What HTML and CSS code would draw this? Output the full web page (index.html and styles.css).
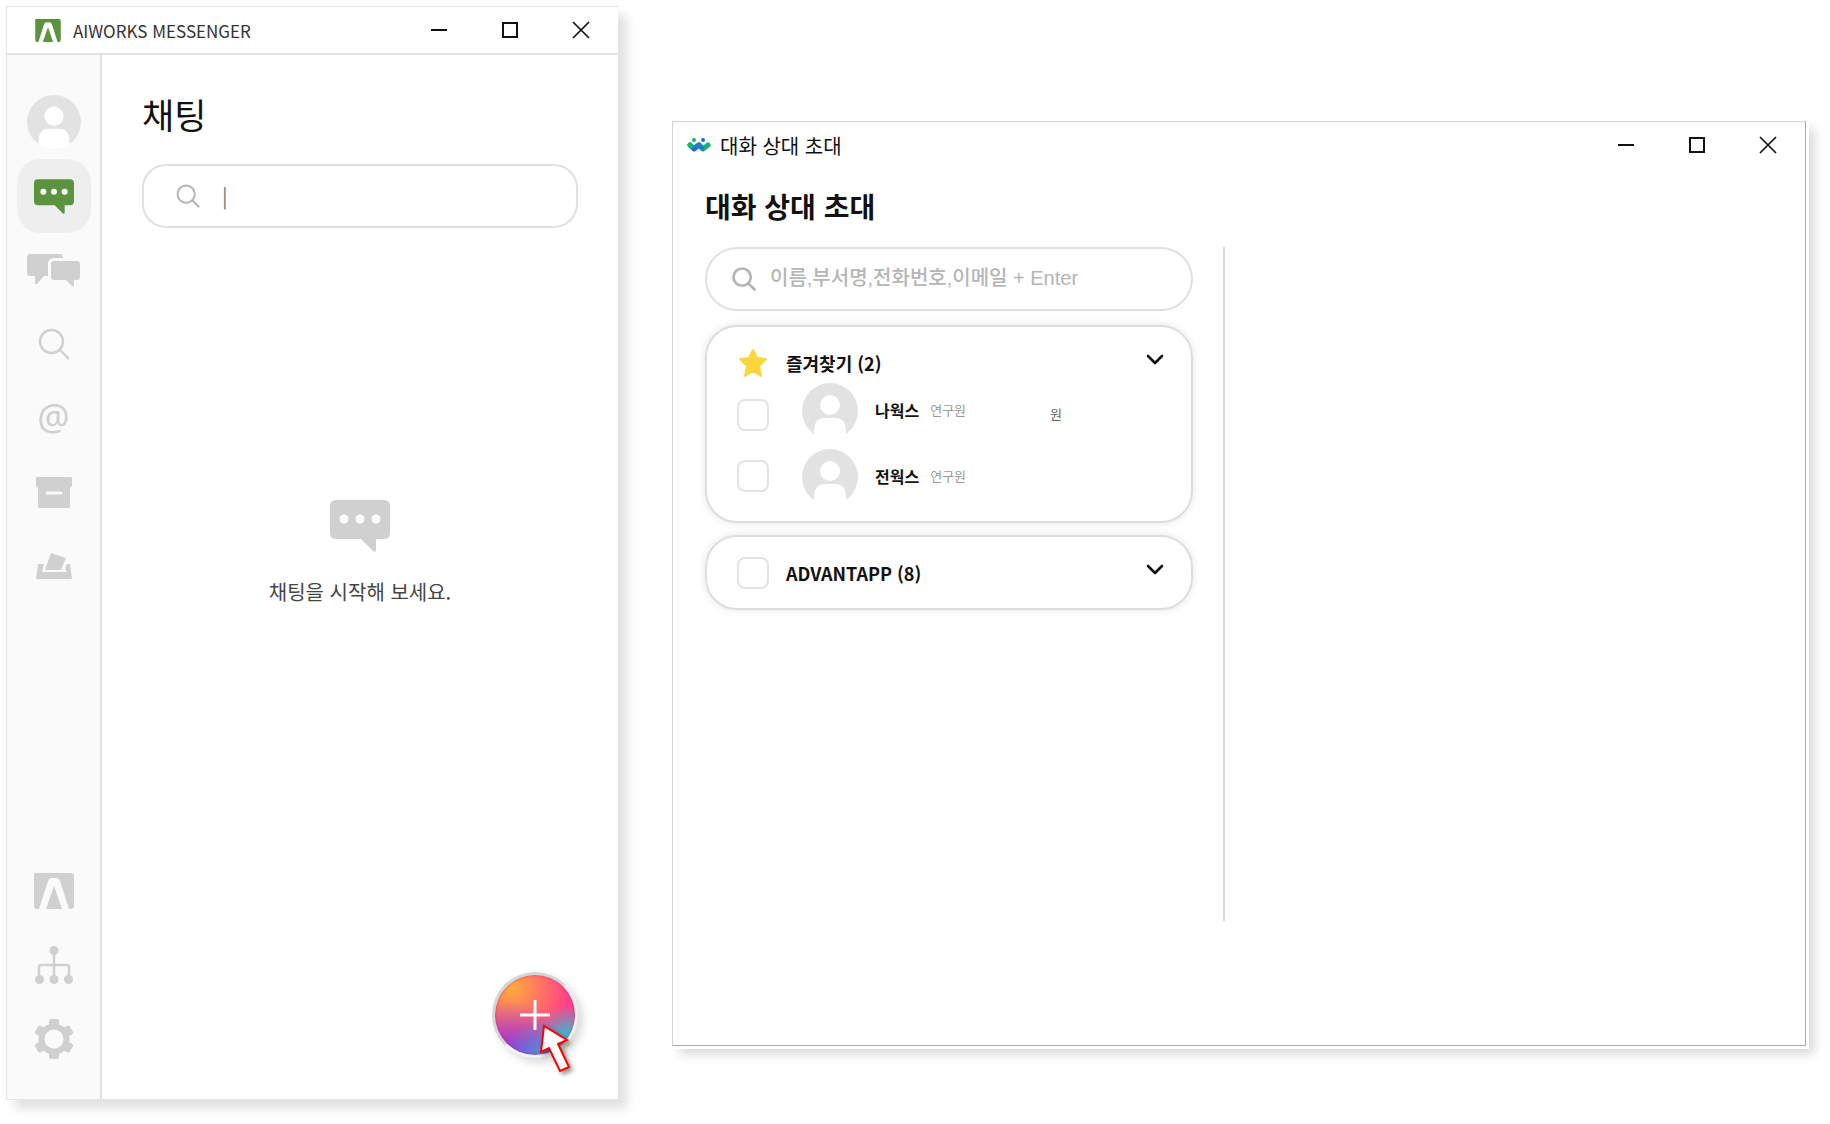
FILE: index.html
```html
<!DOCTYPE html>
<html lang="ko">
<head>
    <meta charset="UTF-8">
    <meta name="viewport" content="width=device-width, initial-scale=1.0">
    <title>AIWORKS MESSENGER</title>
    <link rel="stylesheet" href="styles.css">
</head>
<body>
    <!-- shared icons -->
    <svg class="icon-defs" width="0" height="0" aria-hidden="true">
        <symbol id="icon-logo" viewBox="0 0 40 36">
            <path fill="currentColor" fill-rule="evenodd" d="M1 0H37Q40 0 40 3V33Q40 36 37 36H35L26 8Q25 5 22 5H18Q15 5 14 8L5 36H3Q0 36 0 33V1Q0 0 1 0ZM20 13L28 36H12Z"/>
        </symbol>
        <symbol id="icon-bubble" viewBox="0 0 60 52">
            <path fill="currentColor" d="M6 0H54Q60 0 60 6V33Q60 39 54 39H46V50Q46 53 43 51L31 39H6Q0 39 0 33V6Q0 0 6 0Z"/>
            <g fill="#fff"><circle cx="14" cy="19" r="4.5"/><circle cx="30" cy="19" r="4.5"/><circle cx="46" cy="19" r="4.5"/></g>
        </symbol>
        <symbol id="icon-search" viewBox="0 0 32 32">
            <g fill="none" stroke="currentColor"><circle cx="13.5" cy="13.5" r="11.5"/><path d="M22 22L31 31"/></g>
        </symbol>
        <symbol id="icon-avatar" viewBox="0 0 56 56">
            <circle cx="28" cy="28" r="28" fill="#e2e2e2"/>
            <circle cx="28" cy="22" r="10" fill="#fff"/>
            <path fill="#fff" d="M12 51V48Q12 35 23 35H33Q44 35 44 48V51Q37 56 28 56T12 51Z"/>
        </symbol>
        <symbol id="icon-min" viewBox="0 0 18 18"><path d="M1 9H17" stroke="currentColor" stroke-width="2"/></symbol>
        <symbol id="icon-max" viewBox="0 0 18 18"><path d="M2 2H16V16H2Z" fill="none" stroke="currentColor" stroke-width="2"/></symbol>
        <symbol id="icon-close" viewBox="0 0 18 18"><path d="M1 1L17 17M17 1L1 17" stroke="currentColor" stroke-width="1.700"/></symbol>
        <symbol id="icon-chevron" viewBox="0 0 18 12"><path d="M2 2L9 9L16 2" fill="none" stroke="currentColor" stroke-width="2.600" stroke-linecap="round" stroke-linejoin="round"/></symbol>
    </svg>

    <section class="window chat-window">
        <header class="titlebar">
            <svg class="brand" width="26" height="23"><use href="#icon-logo"/></svg>
            <span class="app-name">AIWORKS MESSENGER</span>
            <div class="window-controls">
                <button type="button" aria-label="최소화"><svg width="18" height="18"><use href="#icon-min"/></svg></button>
                <button type="button" aria-label="최대화"><svg width="18" height="18"><use href="#icon-max"/></svg></button>
                <button type="button" aria-label="닫기"><svg width="18" height="18"><use href="#icon-close"/></svg></button>
            </div>
        </header>

        <div class="chat-body">
            <nav class="sidebar">
                <button type="button" aria-label="프로필"><svg width="54" height="54"><use href="#icon-avatar"/></svg></button>
                <button type="button" class="active" aria-label="채팅"><svg width="40" height="35"><use href="#icon-bubble"/></svg></button>
                <button type="button" aria-label="그룹 채팅">
                    <svg width="54" height="32" viewBox="0 0 54 32" fill="currentColor">
                        <path d="M3 0H33Q36 0 36 4H27Q21 4 21 10V22H17L10 30H8V22H3Q0 22 0 19V3Q0 0 3 0Z"/>
                        <path d="M27 7H50Q53 7 53 10V23Q53 26 50 26H47V32H45L39 26H27Q24 26 24 23V10Q24 7 27 7Z"/>
                    </svg>
                </button>
                <button type="button" aria-label="검색"><svg width="32" height="32" stroke-width="2.400"><use href="#icon-search"/></svg></button>
                <button type="button" class="mention" aria-label="멘션">@</button>
                <button type="button" aria-label="보관함">
                    <svg width="36" height="31" viewBox="0 0 36 31">
                        <path fill="currentColor" d="M1 0H35L36 1V9L34 11V30L33 31H3L2 30V11L0 9V1Z"/>
                        <path d="M11 16H25" stroke="#fafafa" stroke-width="3" stroke-linecap="round"/>
                    </svg>
                </button>
                <button type="button" aria-label="수신함">
                    <svg width="36" height="26" viewBox="0 0 36 26" fill="currentColor">
                        <path d="M15 0L30 5L25 17H9Z"/>
                        <path d="M2 11H8L6 19H31L29 15L31 11H34L36 26H0Z"/>
                    </svg>
                </button>
                <span class="spacer"></span>
                <button type="button" aria-label="AIWORKS"><svg width="40" height="36"><use href="#icon-logo"/></svg></button>
                <button type="button" aria-label="조직도">
                    <svg width="38" height="38" viewBox="0 0 38 38">
                        <path d="M19 5V33M4 33V21Q4 19 6 19H32Q34 19 34 21V33" fill="none" stroke="currentColor" stroke-width="2.500"/>
                        <g fill="currentColor"><circle cx="19" cy="4.500" r="4.500"/><circle cx="4.500" cy="33.500" r="4.500"/><circle cx="19" cy="33.500" r="4.500"/><circle cx="33.500" cy="33.500" r="4.500"/></g>
                    </svg>
                </button>
                <button type="button" aria-label="설정">
                    <svg width="40" height="40" viewBox="-20 -20 40 40">
                        <circle r="12.500" fill="none" stroke="currentColor" stroke-width="6"/>
                        <g fill="currentColor">
                            <path id="tooth" d="M-4 -20H4L5 -18V-14L8 -12H-8L-5 -14V-18Z"/>
                            <use href="#tooth" transform="rotate(60)"/><use href="#tooth" transform="rotate(120)"/>
                            <use href="#tooth" transform="rotate(180)"/><use href="#tooth" transform="rotate(240)"/>
                            <use href="#tooth" transform="rotate(300)"/>
                        </g>
                    </svg>
                </button>
            </nav>

            <main class="chat-main">
                <h1>채팅</h1>
                <label class="search-box">
                    <svg width="24" height="24" stroke-width="2.600"><use href="#icon-search"/></svg>
                    <input type="text" value="|" aria-label="채팅 검색">
                </label>
                <div class="empty">
                    <svg width="60" height="52"><use href="#icon-bubble"/></svg>
                    <p>채팅을 시작해 보세요.</p>
                </div>
                <div class="fab-wrap">
                    <button type="button" class="fab" aria-label="새 채팅">
                        <svg width="30" height="30" viewBox="0 0 30 30"><path d="M15 1V29M1 15H29" stroke="#fff" stroke-width="3" stroke-linecap="round"/></svg>
                    </button>
                    <svg class="cursor" width="32" height="50" viewBox="0 0 32 50"><path d="M4 2L1 28L9 24L20 47L29 43L18 20L27 16Z" fill="#fff" stroke="#f00" stroke-width="2"/></svg>
                </div>
            </main>
        </div>
    </section>

    <section class="window invite-window">
        <header class="titlebar">
            <svg class="brand" width="24" height="14" viewBox="0 0 24 14">
                <g fill="none" stroke-width="5" stroke-linecap="round" stroke-linejoin="round">
                    <path d="M3 7L7 11L12 7" stroke="#2b63ee"/>
                    <path d="M12 7L16 11L21 7" stroke="#12b76f"/>
                    <path d="M10 8L12 7L15 10" stroke="#1f7fbf"/>
                    <path d="M3 7L4 8" stroke="#12b76f"/>
                </g>
                <circle cx="7" cy="2" r="2" fill="#12b76f"/><circle cx="16" cy="2" r="2" fill="#2b63ee"/>
            </svg>
            <span class="app-name">대화 상대 초대</span>
            <div class="window-controls">
                <button type="button" aria-label="최소화"><svg width="18" height="18"><use href="#icon-min"/></svg></button>
                <button type="button" aria-label="최대화"><svg width="18" height="18"><use href="#icon-max"/></svg></button>
                <button type="button" aria-label="닫기"><svg width="18" height="18"><use href="#icon-close"/></svg></button>
            </div>
        </header>

        <h2>대화 상대 초대</h2>
        <div class="invite-body">
            <div class="picker">
                <label class="search-box round">
                    <svg width="24" height="24" stroke-width="3.600"><use href="#icon-search"/></svg>
                    <input type="text" placeholder="이름,부서명,전화번호,이메일 + Enter" aria-label="대화 상대 검색">
                </label>

                <div class="card favorites">
                    <div class="card-head">
                        <svg width="32" height="30" viewBox="0 0 32 30"><path d="M16 2L20 10L29 11L22 18L24 28L16 23L8 28L10 18L3 11L12 10Z" fill="#fdd63c" stroke="#fdd63c" stroke-width="2" stroke-linejoin="round"/></svg>
                        <h3>즐겨찾기 (2)</h3>
                        <button type="button" class="toggle" aria-label="접기"><svg width="18" height="12"><use href="#icon-chevron"/></svg></button>
                    </div>
                    <div class="members">
                        <div class="checks">
                            <input type="checkbox" id="member1">
                            <input type="checkbox" id="member2">
                        </div>
                        <div class="people">
                            <label class="person" for="member1">
                                <svg width="56" height="56"><use href="#icon-avatar"/></svg>
                                <b>나웍스</b><span class="rank">연구원</span><span class="note">원</span>
                            </label>
                            <label class="person" for="member2">
                                <svg width="56" height="56"><use href="#icon-avatar"/></svg>
                                <b>전웍스</b><span class="rank">연구원</span>
                            </label>
                        </div>
                    </div>
                </div>

                <div class="card">
                    <div class="card-head">
                        <input type="checkbox" id="group1">
                        <h3><label for="group1">ADVANTAPP (8)</label></h3>
                        <button type="button" class="toggle" aria-label="펼치기"><svg width="18" height="12"><use href="#icon-chevron"/></svg></button>
                    </div>
                </div>
            </div>
            <div class="selected"></div>
        </div>
    </section>
</body>
</html>
```

FILE: styles.css
```css
* {
    box-sizing: border-box;
}
body {
    margin: 0;
    min-height: 100vh;
    padding: 6px 24px 24px 6px;
    display: grid;
    grid-template-columns: 612fr 1134fr;
    gap: 54px;
    background-color: #fff;
    color: #111;
    font-family: "Noto Sans CJK KR", "Noto Sans", sans-serif;
}
h1, h2, h3, p {
    margin: 0;
}
svg {
    display: block;
    flex-shrink: 0;
}
button {
    padding: 0;
    border: none;
    background: none;
    color: inherit;
    cursor: pointer;
    display: flex;
    align-items: center;
    justify-content: center;
}
.icon-defs {
    position: absolute;
}
.window {
    background-color: #fff;
    display: flex;
    flex-direction: column;
}
.titlebar {
    display: flex;
    align-items: center;
    height: 48px;
    padding-right: 2px;
}
.app-name {
    white-space: nowrap;
}
.window-controls {
    display: flex;
    margin-left: auto;
}
.window-controls button {
    width: 71px;
    height: 40px;
}

/* chat window */
.chat-window {
    border: 1px solid #e5e5e5;
    border-right: none;
    box-shadow: 9px 9px 10px rgba(0, 0, 0, 0.12);
}
.chat-window .titlebar {
    padding-left: 28px;
    gap: 12px;
    border-bottom: 2px solid #e2e2e2;
    font-size: 17px;
}
.chat-window .app-name {
    color: #333;
}
.chat-window .brand {
    color: #5c933f;
}
.chat-body {
    flex: 1;
    display: flex;
}
.sidebar {
    width: 95px;
    padding: 30px 0 23px;
    display: flex;
    flex-direction: column;
    align-items: center;
    background-color: #fafafa;
    border-right: 2px solid #e2e2e2;
    color: #d0d0d0;
}
.sidebar button {
    width: 74px;
    height: 74px;
    border-radius: 24px;
}
.sidebar .active {
    background-color: #eee;
    color: #5c933f;
}
.sidebar .mention {
    padding-bottom: 4px;
    font-family: "Noto Sans", sans-serif;
    font-size: 36px;
}
.spacer {
    flex: 1;
}
.chat-main {
    flex: 1;
    min-width: 0;
    padding: 35px 40px 41px;
    display: flex;
    flex-direction: column;
}
h1 {
    font-size: 35px;
    font-weight: 400;
    line-height: 48px;
    margin-bottom: 26px;
}
.search-box {
    display: flex;
    align-items: center;
    height: 64px;
    padding: 0 32px;
    border: 2px solid #e0e0e0;
    border-radius: 24px;
    color: #b5b5b5;
}
.search-box input {
    flex: 1;
    min-width: 0;
    margin-left: 22px;
    padding: 0 0 2px;
    border: none;
    outline: none;
    background: none;
    color: #888;
    font-family: inherit;
    font-size: 20px;
    font-weight: 500;
}
.empty {
    flex: 1;
    padding-top: 272px;
    display: flex;
    flex-direction: column;
    align-items: center;
    color: #d0d0d0;
}
.empty p {
    margin-top: 25px;
    font-size: 20px;
    line-height: 30px;
    color: #444;
}
.fab-wrap {
    position: relative;
    align-self: flex-end;
}
.fab {
    width: 86px;
    height: 86px;
    border: 3px solid #d3d6d8;
    border-right-color: #eee;
    border-bottom-color: #f3f3f3;
    border-radius: 50%;
    background:
        radial-gradient(circle at 92% 76%, #30bdd2 0, rgba(48, 189, 210, 0) 32%),
        radial-gradient(circle at 62% 104%, #2f9ae8 0, rgba(47, 154, 232, 0) 42%),
        radial-gradient(circle at 18% 98%, #8a3ce0 0, rgba(138, 60, 224, 0) 52%),
        radial-gradient(circle at 20% 15%, #ffad3b 0, rgba(255, 150, 70, 0) 62%),
        #ff4188;
    box-shadow: inset 0 0 3px rgba(220, 0, 120, 0.6), 5px 5px 8px rgba(0, 0, 0, 0.15);
}
.cursor {
    position: absolute;
    left: 48px;
    top: 52px;
    filter: drop-shadow(3px 3px 2px rgba(0, 0, 0, 0.4));
}

/* invite window */
.invite-window {
    margin: 115px 0 54px;
    border: 1px solid #d4d4d4;
    border-right-color: #aaa;
    border-bottom-color: #aaa;
    box-shadow: 0 0 0 3px #fff, 8px 8px 10px rgba(0, 0, 0, 0.16);
}
.invite-window .titlebar {
    height: 46px;
    padding-left: 14px;
    gap: 9px;
    font-size: 20px;
}
h2 {
    padding-left: 32px;
    font-size: 28px;
    font-weight: 700;
    line-height: 40px;
    margin: 18px 0 21px;
}
.invite-body {
    flex: 1;
    display: flex;
    padding: 0 32px 124px;
}
.picker {
    flex: 0 1 488px;
    margin-right: 30px;
}
.selected {
    flex: 1;
    border-left: 2px solid #ddd;
}
.search-box.round {
    border-radius: 32px;
    padding: 0 25px;
    margin-bottom: 14px;
}
.round input {
    margin-left: 14px;
    font-family: "Liberation Sans", "Noto Sans CJK KR", sans-serif;
}
.round input::placeholder {
    color: #b5b5b5;
    opacity: 1;
}
.card {
    padding: 20px 27px 19px 30px;
    border: 2px solid #ddd;
    border-radius: 32px;
    box-shadow: 0 0 8px rgba(0, 0, 0, 0.1);
    margin-bottom: 12px;
}
.card-head {
    display: flex;
    align-items: center;
    gap: 17px;
    height: 32px;
}
h3 {
    font-size: 18px;
    font-weight: 700;
    line-height: 24px;
}
.toggle {
    margin-left: auto;
    height: 32px;
    padding-bottom: 6px;
}
input[type="checkbox"] {
    appearance: none;
    width: 32px;
    height: 32px;
    margin: 0;
    border: 2px solid #e3e3e3;
    border-radius: 8px;
    background-color: #fff;
}
.favorites {
    padding-bottom: 16px;
}
.members {
    display: flex;
    gap: 33px;
    margin-top: 4px;
}
.checks {
    display: flex;
    flex-direction: column;
    gap: 29px;
    padding-top: 16px;
}
.people {
    display: flex;
    flex-direction: column;
    gap: 10px;
}
.person {
    display: flex;
    align-items: center;
    font-size: 13px;
    line-height: 20px;
}
.person b {
    margin: 0 11px 0 17px;
    font-size: 16px;
    font-weight: 700;
}
.person b, .rank {
    padding-bottom: 3px;
}
.rank {
    color: #999;
}
.note {
    margin-left: 84px;
    padding-top: 6px;
    color: #666;
}
```
